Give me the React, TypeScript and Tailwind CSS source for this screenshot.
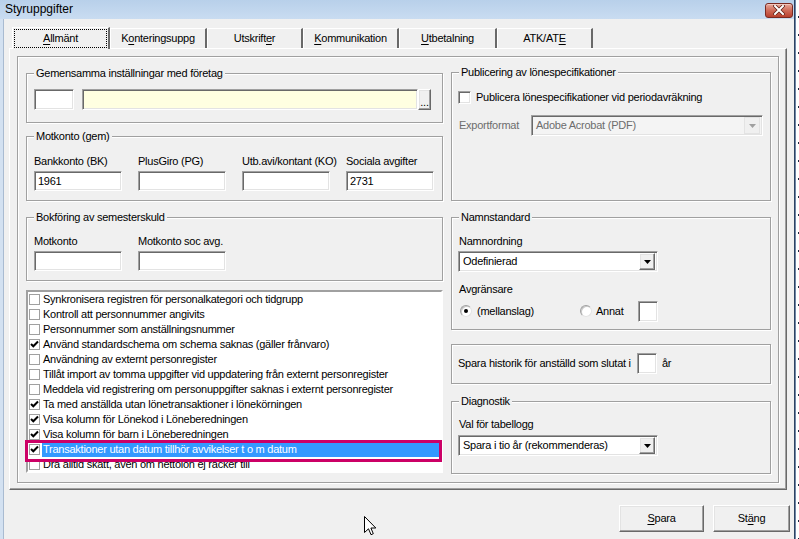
import React from "react";

const sunken =
  "border border-t-[#a0a0a0] border-l-[#a0a0a0] border-r-white border-b-white shadow-[inset_1px_1px_0_#696969,inset_-1px_-1px_0_#e3e3e3]";
const raised =
  "border border-t-white border-l-white border-r-[#696969] border-b-[#696969] shadow-[inset_-1px_-1px_0_#a0a0a0,inset_1px_1px_0_#e3e3e3]";
const etched = "border border-[#a0a0a0] shadow-[inset_1px_1px_0_#ffffff,1px_1px_0_#ffffff]";

function U({ children }: { children: React.ReactNode }) {
  return <span className="underline decoration-1 underline-offset-[2px]">{children}</span>;
}

function Group({
  title,
  className,
  children,
}: {
  title?: string;
  className?: string;
  children?: React.ReactNode;
}) {
  return (
    <div className={`relative ${etched} ${className ?? ""}`}>
      {title && (
        <span className="absolute -top-[7px] left-[7px] px-[2px] bg-[#f0f0f0] leading-[13px] whitespace-nowrap">
          {title}
        </span>
      )}
      {children}
    </div>
  );
}

function Input({ className, value, bg = "bg-white" }: { className?: string; value?: string; bg?: string }) {
  return (
    <div className={`${sunken} ${bg} h-[20px] flex items-center pl-[3px] leading-[13px] ${className ?? ""}`}>
      {value}
    </div>
  );
}

function Arrow({ color = "#000" }: { color?: string }) {
  return (
    <svg width="7" height="4" viewBox="0 0 7 4">
      <path d="M0 0 H7 L3.5 4 Z" fill={color} />
    </svg>
  );
}

function Combo({
  value,
  className,
  disabled,
}: {
  value: string;
  className?: string;
  disabled?: boolean;
}) {
  return (
    <div
      className={`${sunken} ${disabled ? "bg-[#f4f4f4] text-[#6d6d6d]" : "bg-white"} h-[21px] flex items-center justify-between p-[2px] ${className ?? ""}`}
    >
      <span className="pl-[2px] leading-[13px] whitespace-nowrap">{value}</span>
      <div
        className={`${disabled ? "border border-[#e3e3e3] bg-[#f0f0f0]" : raised + " bg-[#f0f0f0]"} w-[16px] h-[17px] flex items-center justify-center`}
      >
        <Arrow color={disabled ? "#a0a0a0" : "#000"} />
      </div>
    </div>
  );
}

function ListCheck({ checked }: { checked: boolean }) {
  return (
    <div className="w-[11px] h-[11px] border border-[#a0a0a0] bg-white flex items-center justify-center shrink-0">
      {checked && (
        <svg width="9" height="9" viewBox="0 0 9 9">
          <path d="M1 4 L3.3 6.3 L8 1.5" stroke="#000" strokeWidth="2" fill="none" />
        </svg>
      )}
    </div>
  );
}

function Radio({ checked }: { checked?: boolean }) {
  return (
    <div className="w-[12px] h-[12px] rounded-full border border-t-[#a0a0a0] border-l-[#a0a0a0] border-r-[#e3e3e3] border-b-[#e3e3e3] bg-white shadow-[inset_1px_1px_0_#c8c8c8] flex items-center justify-center shrink-0">
      {checked && <div className="w-[4px] h-[4px] rounded-full bg-black" />}
    </div>
  );
}

const rows: [string, boolean][] = [
  ["Synkronisera registren för personalkategori och tidgrupp", false],
  ["Kontroll att personnummer angivits", false],
  ["Personnummer som anställningsnummer", false],
  ["Använd standardschema om schema saknas (gäller frånvaro)", true],
  ["Användning av externt personregister", false],
  ["Tillåt import av tomma uppgifter vid uppdatering från externt personregister", false],
  ["Meddela vid registrering om personuppgifter saknas i externt personregister", false],
  ["Ta med anställda utan lönetransaktioner i lönekörningen", true],
  ["Visa kolumn för Lönekod i Löneberedningen", true],
  ["Visa kolumn för barn i Löneberedningen", true],
  ["Transaktioner utan datum tillhör avvikelser t o m datum", true],
  ["Dra alltid skatt, även om nettolön ej räcker till", false],
];

function Tab({
  children,
  selected,
  w,
}: {
  children: React.ReactNode;
  selected?: boolean;
  w: string;
}) {
  if (selected) {
    return (
      <div
        className={`${w} relative z-10 h-[22px] -mb-px bg-[#f0f0f0] border-t border-l border-t-white border-l-white border-r-2 border-r-[#696969] pt-[1px] pl-[1px] pr-[1px]`}
      >
        <div className="h-[19px] border border-dotted border-black flex items-center justify-center">
          {children}
        </div>
      </div>
    );
  }
  return (
    <div
      className={`${w} h-[20px] bg-[#f0f0f0] border-t border-l border-t-white border-l-white border-r-2 border-r-[#696969] flex items-center justify-center pb-[1px]`}
    >
      {children}
    </div>
  );
}

export default function App() {
  return (
    <div className="w-[799px] h-[539px] overflow-hidden relative flex bg-white font-['Liberation_Sans',Arial,sans-serif] text-[11px] tracking-[-0.25px] text-black">
      {/* window */}
      <div className="w-[795px] h-full flex flex-col border-r border-[#2d4262]">
        {/* title bar */}
        <div className="h-[19px] shrink-0 bg-gradient-to-b from-[#b8d0ea] to-[#c9dcf1] flex items-center justify-between pl-[5px] pr-[1px]">
          <span className="text-[12px] tracking-normal leading-[15px] text-black">Styruppgifter</span>
          <div className="w-[28px] h-[15px] mt-[1px] rounded-[3px] border border-[#7a2a22] bg-gradient-to-b from-[#e6a89b] via-[#cf6a58] to-[#b8402e] flex items-center justify-center shadow-[inset_0_1px_0_#f1c6bc]">
            <svg width="12" height="10" viewBox="0 0 12 10">
              <path d="M2 1 L10 9 M10 1 L2 9" stroke="#5b1a12" strokeWidth="3.4" strokeLinecap="square" />
              <path d="M2 1 L10 9 M10 1 L2 9" stroke="#ffffff" strokeWidth="2" strokeLinecap="square" />
            </svg>
          </div>
        </div>
        {/* body */}
        <div className="flex-1 flex">
          <div className="w-[4px] bg-[#d3e1f1] border-r border-[#a9bbd1]" />
          <div className="flex-1 bg-[#f0f0f0] flex flex-col">
            {/* tabs */}
            <div className="mt-[8px] ml-[8px] h-[21px] flex items-end">
              <Tab selected w="w-[98px]">
                <span>
                  <U>A</U>llmänt
                </span>
              </Tab>
              <Tab w="w-[97px]">
                <span>
                  K<U>o</U>nteringsuppg
                </span>
              </Tab>
              <Tab w="w-[96px]">
                <span>
                  Utskrift<U>e</U>r
                </span>
              </Tab>
              <Tab w="w-[96px]">
                <span>
                  <U>K</U>ommunikation
                </span>
              </Tab>
              <Tab w="w-[98px]">
                <span>
                  <U>U</U>tbetalning
                </span>
              </Tab>
              <Tab w="w-[96px]">
                <span>
                  ATK/AT<U>E</U>
                </span>
              </Tab>
            </div>
            {/* panel */}
            <div className="ml-[5px] w-[778px] h-[442px] border border-t-white border-l-white border-r-[#696969] border-b-[#696969] shadow-[inset_-1px_-1px_0_#a0a0a0] pt-[7px] pl-[7px]">
              <div className={`w-[762px] h-[427px] ${etched} flex gap-[8px] pl-[8px] pt-[16px]`}>
                {/* left column */}
                <div className="w-[417px] flex flex-col">
                  <Group title="Gemensamma inställningar med företag" className="h-[50px]">
                    <div className="flex pl-[7px] pt-[15px]">
                      <Input className="w-[40px] h-[21px]" />
                      <Input className="ml-[8px] w-[336px] h-[21px]" bg="bg-[#ffffe1]" />
                      <div className={`${raised} bg-[#f0f0f0] w-[13px] h-[21px] flex items-end justify-center pb-[3px] leading-[8px]`}>
                        ...
                      </div>
                    </div>
                  </Group>
                  <Group title="Motkonto (gem)" className="mt-[13px] h-[65px]">
                    <div className="grid grid-cols-[88px_88px_88px_88px] gap-x-[16px] pl-[7px] pt-[18px]">
                      <span className="leading-[13px] whitespace-nowrap">Bankkonto (BK)</span>
                      <span className="leading-[13px] whitespace-nowrap">PlusGiro (PG)</span>
                      <span className="leading-[13px] whitespace-nowrap">Utb.avi/kontant (KO)</span>
                      <span className="leading-[13px] whitespace-nowrap">Sociala avgifter</span>
                      <Input className="mt-[3px]" value="1961" />
                      <Input className="mt-[3px]" />
                      <Input className="mt-[3px]" />
                      <Input className="mt-[3px]" value="2731" />
                    </div>
                  </Group>
                  <Group title="Bokföring av semesterskuld" className="mt-[16px] h-[64px]">
                    <div className="grid grid-cols-[88px_88px] gap-x-[16px] pl-[7px] pt-[17px]">
                      <span className="leading-[13px] whitespace-nowrap">Motkonto</span>
                      <span className="leading-[13px] whitespace-nowrap">Motkonto soc avg.</span>
                      <Input className="mt-[3px]" />
                      <Input className="mt-[3px]" />
                    </div>
                  </Group>
                  {/* checklist */}
                  <div className="relative mt-[9px] h-[183px]">
                    <div className="h-full border-2 border-t-[#a0a0a0] border-l-[#a0a0a0] border-r-white border-b-white shadow-[inset_1px_1px_0_#696969,inset_-1px_-1px_0_#e3e3e3] bg-white overflow-hidden">
                      <div className="bg-white overflow-hidden h-full">
                        {rows.map(([label, checked], i) => {
                          const sel = i === 10;
                          return (
                            <div key={i} className="h-[15px] flex items-center pl-[1px]">
                              <ListCheck checked={checked} />
                              <div
                                className={`flex-1 h-[15px] flex items-center ml-[2px] mr-[2px] pl-[1px] whitespace-nowrap leading-[13px] ${
                                  sel ? "bg-[#3399ff] text-white" : ""
                                }`}
                              >
                                {label}
                              </div>
                            </div>
                          );
                        })}
                      </div>
                    </div>
                    {/* annotation rectangle */}
                    <div className="absolute left-[-1px] top-[150px] w-[417px] h-[22px] border-[3px] border-[#cc0066] pointer-events-none" />
                  </div>
                </div>
                {/* right column */}
                <div className="w-[320px] flex flex-col -mt-px">
                  <Group title="Publicering av lönespecifikationer" className="h-[129px]">
                    <div className="pl-[6px] pt-[18px] flex items-center">
                      <div className={`w-[13px] h-[13px] bg-white ${sunken}`} />
                      <span className="ml-[5px] leading-[13px]">Publicera lönespecifikationer vid periodavräkning</span>
                    </div>
                    <div className="pl-[7px] mt-[11px] flex items-center">
                      <span className="w-[72px] text-[#6d6d6d] leading-[13px]">Exportformat</span>
                      <Combo value="Adobe Acrobat (PDF)" className="w-[232px] h-[20px]" disabled />
                    </div>
                  </Group>
                  <Group title="Namnstandard" className="mt-[16px] h-[113px]">
                    <div className="pl-[6px] pt-[17px] flex flex-col items-start">
                      <span className="leading-[13px] pl-px">Namnordning</span>
                      <Combo value="Odefinierad" className="mt-[3px] w-[200px]" />
                      <span className="leading-[13px] mt-[11px] pl-px">Avgränsare</span>
                      <div className="mt-[5px] flex items-center h-[20px]">
                        <div className="ml-[2px]">
                          <Radio checked />
                        </div>
                        <span className="ml-[5px] w-[103px] leading-[13px]">(mellanslag)</span>
                        <Radio />
                        <span className="ml-[4px] w-[42px] leading-[13px]">Annat</span>
                        <Input className="w-[20px] h-[21px]" />
                      </div>
                    </div>
                  </Group>
                  <Group className="mt-[14px] h-[40px]">
                    <div className="pl-[6px] pt-[8px] flex items-center">
                      <span className="w-[179px] leading-[13px] whitespace-nowrap">Spara historik för anställd som slutat i</span>
                      <Input className="w-[20px] h-[21px]" />
                      <span className="ml-[5px] leading-[13px]">år</span>
                    </div>
                  </Group>
                  <Group title="Diagnostik" className="mt-[17px] h-[73px]">
                    <div className="pl-[6px] pt-[16px] flex flex-col items-start">
                      <span className="leading-[13px] pl-px">Val för tabellogg</span>
                      <Combo value="Spara i tio år (rekommenderas)" className="mt-[4px] w-[200px]" />
                    </div>
                  </Group>
                </div>
              </div>
            </div>
            {/* buttons */}
            <div className="mt-[15px] flex justify-end gap-[9px] pr-[4px]">
              <div className={`${raised} bg-[#f0f0f0] w-[85px] h-[27px] flex items-center justify-center`}>
                <span>
                  <U>S</U>para
                </span>
              </div>
              <div className={`${raised} bg-[#f0f0f0] w-[77px] h-[27px] flex items-center justify-center`}>
                <span>
                  St<U>ä</U>ng
                </span>
              </div>
            </div>
          </div>
        </div>
      </div>
      {/* strip of window behind */}
      <div className="flex-1 h-full bg-white border-l border-[#6f86a6] flex justify-end">
        <div className="w-px h-full bg-[repeating-linear-gradient(to_bottom,transparent_0px,transparent_16px,#1b2a40_16px,#1b2a40_18px)]" />
      </div>
      {/* mouse cursor */}
      <svg className="absolute left-[364px] top-[516px]" width="13" height="20" viewBox="0 0 13 20">
        <path
          d="M0.5 0.5 L0.5 16.5 L4.5 12.8 L7 18.7 L9.3 17.7 L6.9 12 L11.8 12 Z"
          fill="#ffffff"
          stroke="#000000"
          strokeWidth="1"
        />
      </svg>
    </div>
  );
}
